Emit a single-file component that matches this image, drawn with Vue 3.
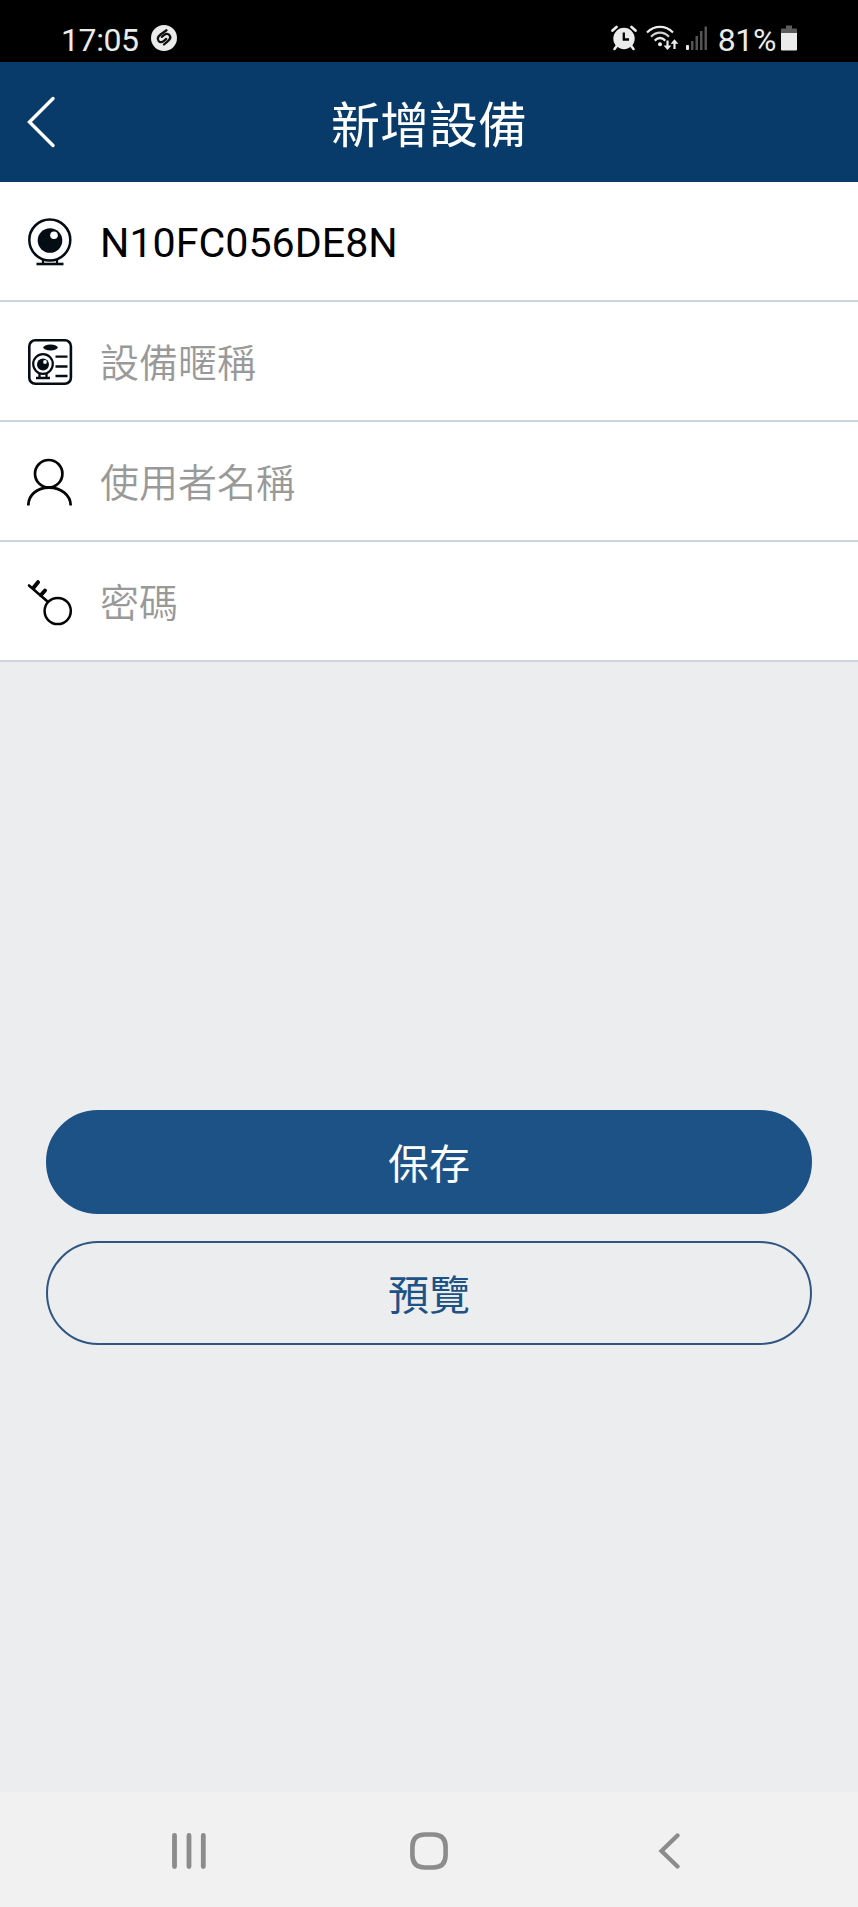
<script setup>
import { ref } from 'vue'

const title = ref('新增設備')
const fields = ref([
  { icon: 'camera', value: 'N10FC056DE8N', placeholder: '' },
  { icon: 'card', value: '', placeholder: '設備暱稱' },
  { icon: 'user', value: '', placeholder: '使用者名稱' },
  { icon: 'key', value: '', placeholder: '密碼' },
])
</script>

<template>
  <div class="page">
    <div class="status">
      <span class="time">17:05</span>
      <svg class="shazam" width="28" height="28" viewBox="0 0 28 28">
        <circle cx="14" cy="14" r="13" fill="#ebebeb" />
        <g fill="none" stroke="#111" stroke-width="2.3" stroke-linecap="round">
          <path d="M16.5 6.3 10.6 10.5C7.600 12.800 7.200 15 8.600 16.900C10 18.600 12 18.500 13.700 17.100L16.200 15" />
          <path d="M11.800 12.800 14.300 10.800C16 9.400 18.100 9.400 19.500 11.200C20.900 13.200 20.300 15.400 17.400 17.600L14 20.500" />
        </g>
      </svg>
      <div class="status-right">
        <svg class="alarm" width="26" height="26" viewBox="0 0 26 26">
          <g stroke="#ebebeb" stroke-linecap="round" fill="none">
            <path d="M1.500 5.500 5.500 2M24.500 5.500 20.500 2" stroke-width="2.700" />
            <path d="M6.500 20 3.500 24M19.500 20 22.500 24" stroke-width="2.600" />
          </g>
          <circle cx="13" cy="13.500" r="10.700" fill="#ebebeb" />
          <path d="M12.800 7.500V14.500H18" fill="none" stroke="#050505" stroke-width="2.300" />
        </svg>
        <svg class="wifi" width="33" height="26" viewBox="0 0 33 26">
          <g fill="none" stroke="#ebebeb" stroke-width="2.200">
            <path d="M1 7.500C8.500 0 19.500 0 27 7.500" />
            <path d="M5 11.700C10.500 6.300 17.500 6.300 23 11.700" stroke="#cfcfcf" />
            <path d="M8.700 15.600C12 12.400 16 12.400 19.300 15.600" />
            <path d="M21.500 15.500V22M28.500 24V17" />
          </g>
          <circle cx="14" cy="19.300" r="2" fill="#ebebeb" />
          <path d="M17.600 20.500H25.400L21.500 25ZM24.600 18.700H32.400L28.500 14.200Z" fill="#ebebeb" />
        </svg>
        <svg class="signal" width="22" height="25" viewBox="0 0 22 25">
          <rect x="0" y="19" width="3" height="5" rx="1" fill="#ebebeb" />
          <g fill="#545454">
            <rect x="5" y="15" width="2.500" height="9" />
            <rect x="9.500" y="10" width="2.500" height="14" />
            <rect x="14" y="5" width="2.500" height="19" />
            <rect x="18.500" y="0.500" width="2.500" height="23.500" />
          </g>
        </svg>
        <span class="percent">81%</span>
        <svg class="battery" width="16" height="26" viewBox="0 0 16 26">
          <path d="M5 0.500H11V3.500H15Q16 3.500 16 4.500V8H0V4.500Q0 3.500 1 3.500H5Z" fill="#5c5c5c" />
          <path d="M0 8H16V24.500Q16 25.500 15 25.500H1Q0 25.500 0 24.500Z" fill="#ebebeb" />
        </svg>
      </div>
    </div>

    <div class="header">
      <svg class="back" width="30" height="52" viewBox="0 0 30 52">
        <path d="M27 2.500 3.500 26 27 49.500" fill="none" stroke="#fff" stroke-width="3.400" stroke-linecap="round" />
      </svg>
      <h1>{{ title }}</h1>
    </div>

    <div class="form">
      <div v-for="item in fields" :key="item.icon" class="row">
        <svg v-if="item.icon === 'camera'" class="icon" width="46" height="48" viewBox="0 0 46 48">
          <circle cx="22.800" cy="22" r="20.500" fill="none" stroke="#050d14" stroke-width="2.500" />
          <circle cx="23" cy="22.500" r="12.300" fill="#050d14" />
          <circle cx="27" cy="17.300" r="3.800" fill="#fff" />
          <path d="M16 42V45M30 42V45" stroke="#050d14" stroke-width="2.200" />
          <path d="M9.500 46H36.500" stroke="#050d14" stroke-width="2.600" />
        </svg>
        <svg v-else-if="item.icon === 'card'" class="icon" width="46" height="48" viewBox="0 0 46 48">
          <rect x="2.300" y="2.200" width="41.600" height="43.600" rx="6" fill="none" stroke="#050d14" stroke-width="2.600" />
          <ellipse cx="23.500" cy="9.500" rx="7.300" ry="2.900" fill="#050d14" />
          <circle cx="16" cy="26" r="9.800" fill="none" stroke="#050d14" stroke-width="2.200" />
          <circle cx="16" cy="26.500" r="6" fill="#050d14" />
          <circle cx="18" cy="24" r="1.900" fill="#fff" />
          <path d="M12.500 35V39M19.500 35V39M9 40H23M28.500 18.700H40.500M28.500 28.500H40.500M28.500 38H40.500" stroke="#050d14" stroke-width="2.300" />
        </svg>
        <svg v-else-if="item.icon === 'user'" class="icon" width="46" height="48" viewBox="0 0 46 48">
          <g fill="none" stroke="#050505" stroke-width="2.700">
            <circle cx="21.700" cy="15.700" r="13.700" />
            <path d="M1.300 47.500C1.300 37 10 29.600 22 29.600S43.700 37 43.700 47.500" />
          </g>
        </svg>
        <svg v-else class="icon" width="46" height="48" viewBox="0 0 46 48">
          <g fill="none" stroke="#050505" stroke-linecap="round">
            <circle cx="30.700" cy="33" r="13.100" stroke-width="2.500" />
            <path d="M2 7.500 20.500 23.500" stroke-width="2.600" />
            <path d="M6.500 9.700 11 4.200M14 17 18 12.500" stroke-width="4" />
          </g>
        </svg>
        <span v-if="item.value" class="value">{{ item.value }}</span>
        <span v-else class="placeholder">{{ item.placeholder }}</span>
      </div>
    </div>

    <div class="actions">
      <button class="btn save">保存</button>
      <button class="btn preview">預覽</button>
    </div>

    <div class="navbar">
      <svg class="recent" width="36" height="36" viewBox="0 0 36 36">
        <path d="M3.500 2.500V33.500M18 2.500V33.500M32.300 2.500V33.500" stroke="#8c8c8c" stroke-width="4.800" stroke-linecap="round" />
      </svg>
      <svg class="home" width="38" height="38" viewBox="0 0 38 38">
        <path d="M15 2.500H23C31.500 2.500 35.600 6.500 35.600 15V23C35.600 31.500 31.500 35.500 23 35.500H15C6.500 35.500 2.400 31.500 2.400 23V15C2.400 6.500 6.500 2.500 15 2.500Z" fill="none" stroke="#8c8c8c" stroke-width="4.600" />
      </svg>
      <svg width="24" height="36" viewBox="0 0 24 36">
        <path d="M20.500 2.500 4.500 18 20.500 33.500" fill="none" stroke="#8c8c8c" stroke-width="4.300" stroke-linecap="round" />
      </svg>
    </div>
  </div>
</template>

<style>
body {
  margin: 0;
}
</style>

<style scoped>
.page {
  width: 858px;
  height: 1907px;
  display: flex;
  flex-direction: column;
  background: #ebedef;
  overflow: hidden;
  font-family: Roboto, "Noto Sans CJK TC", sans-serif;
}
.status {
  height: 62px;
  box-sizing: border-box;
  padding: 14px 61px 0 61px;
  display: flex;
  align-items: center;
  background: #000;
  color: #ebebeb;
  font-size: 32px;
  letter-spacing: -0.4px;
}
.time,
.percent {
  padding-top: 3px;
}
.shazam {
  margin-left: 11px;
}
.status-right {
  margin-left: auto;
  display: flex;
  align-items: center;
}
.wifi {
  margin-left: 9px;
}
.signal {
  margin-left: 7px;
}
.percent {
  margin-left: 10px;
}
.battery {
  margin-left: 5px;
}
.header {
  height: 120px;
  display: grid;
  grid-template-columns: 80px 1fr 80px;
  align-items: center;
  background: #093b6a;
}
.back {
  margin-left: 26px;
}
.header h1 {
  margin: 0;
  padding-top: 10px;
  font-size: 49px;
  line-height: 72px;
  font-weight: 400;
  text-align: center;
  color: #fff;
}
.row {
  height: 120px;
  box-sizing: border-box;
  display: flex;
  align-items: center;
  padding: 2px 0 0 27px;
  background: #fff;
  border-bottom: 2px solid #cdd5dc;
}
.icon {
  margin-right: 27px;
}
.value {
  padding-top: 2px;
  font-size: 41.2px;
  color: #000;
}
.placeholder {
  padding-top: 4px;
  font-size: 39px;
  line-height: 58px;
  font-weight: 350;
  color: #999;
}
.actions {
  margin-top: 448px;
  padding: 0 46px;
  display: flex;
  flex-direction: column;
  gap: 27px;
}
.btn {
  height: 104px;
  padding: 6px 0 0;
  border: 2px solid #1d5286;
  border-radius: 52px;
  font-family: inherit;
  font-size: 41px;
  line-height: 60px;
}
.save {
  background: #1d5286;
  color: #fff;
}
.preview {
  background: transparent;
  border-color: #2f5680;
  color: #1d5286;
}
.navbar {
  height: 115px;
  margin-top: auto;
  box-sizing: border-box;
  padding: 40px 0 37px 171px;
  display: flex;
  align-items: center;
  background: #f1f1f1;
}
.home {
  margin: 0 209px 0 203px;
}
</style>
